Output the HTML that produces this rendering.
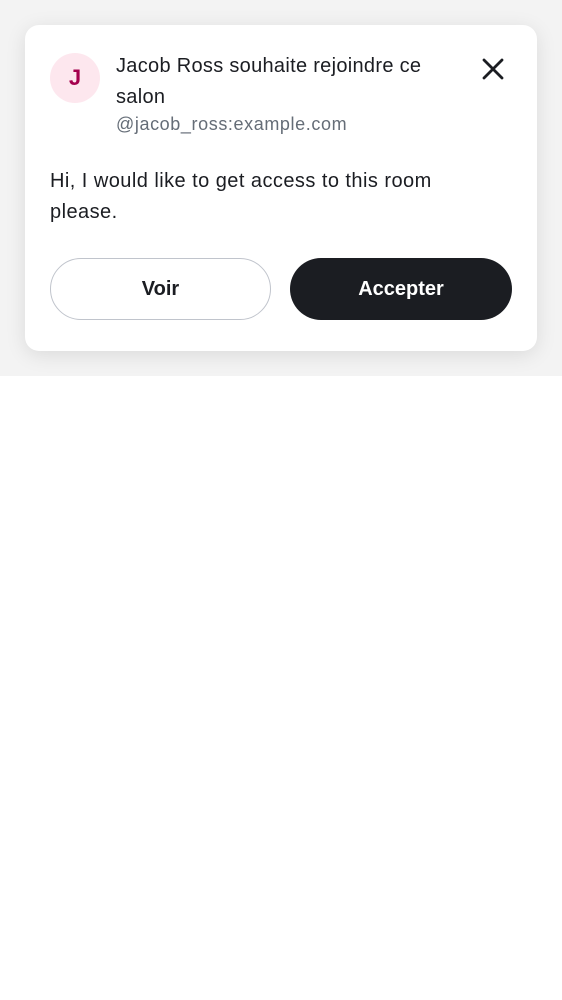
<!DOCTYPE html>
<html><head><style>
body{margin:0;width:562px;height:1000px;background:#fff;font-family:"Liberation Sans",sans-serif;position:relative;overflow:hidden}
.bg{position:absolute;left:0;top:0;width:562px;height:376px;background:#f3f3f3}
.card{position:absolute;left:25px;top:25px;width:512px;height:326px;background:#fff;border-radius:14px;box-shadow:0 4px 20px rgba(0,0,0,.10)}
.av{position:absolute;left:25px;top:28px;width:50px;height:50px;border-radius:50%;background:#fde7ee;color:#a4004d;font-weight:bold;font-size:22px;text-align:center;line-height:50px}
.title{position:absolute;left:91px;top:26px;width:340px;font-size:20px;line-height:31px;color:#1b1d22;letter-spacing:.3px}
.handle{position:absolute;left:91px;top:89px;font-size:18px;color:#656d77;letter-spacing:.6px}
.body{position:absolute;left:25px;top:141px;width:420px;font-size:20px;line-height:31px;color:#1b1d22;letter-spacing:.45px}
.btn{position:absolute;top:233px;height:62px;border-radius:31px;box-sizing:border-box;font-size:20px;text-align:center;line-height:60px;font-weight:bold}
.v{left:25px;width:221px;border:1px solid #c0c4cc;color:#1b1d22}
.a{left:265px;width:222px;background:#1b1d22;color:#fff;line-height:62px}
.x{position:absolute;left:457px;top:33px}
</style></head><body>
<div class="bg"></div>
<div class="card">
<div class="av">J</div>
<div class="title">Jacob Ross souhaite rejoindre ce salon</div>
<div class="handle">@jacob_ross:example.com</div>
<svg class="x" width="22" height="22" viewBox="0 0 22 22"><path d="M2 2L20 20M20 2L2 20" stroke="#1b1d22" stroke-width="2.8" stroke-linecap="round"/></svg>
<div class="body">Hi, I would like to get access to this room please.</div>
<div class="btn v">Voir</div>
<div class="btn a">Accepter</div>
</div>
</body></html>
